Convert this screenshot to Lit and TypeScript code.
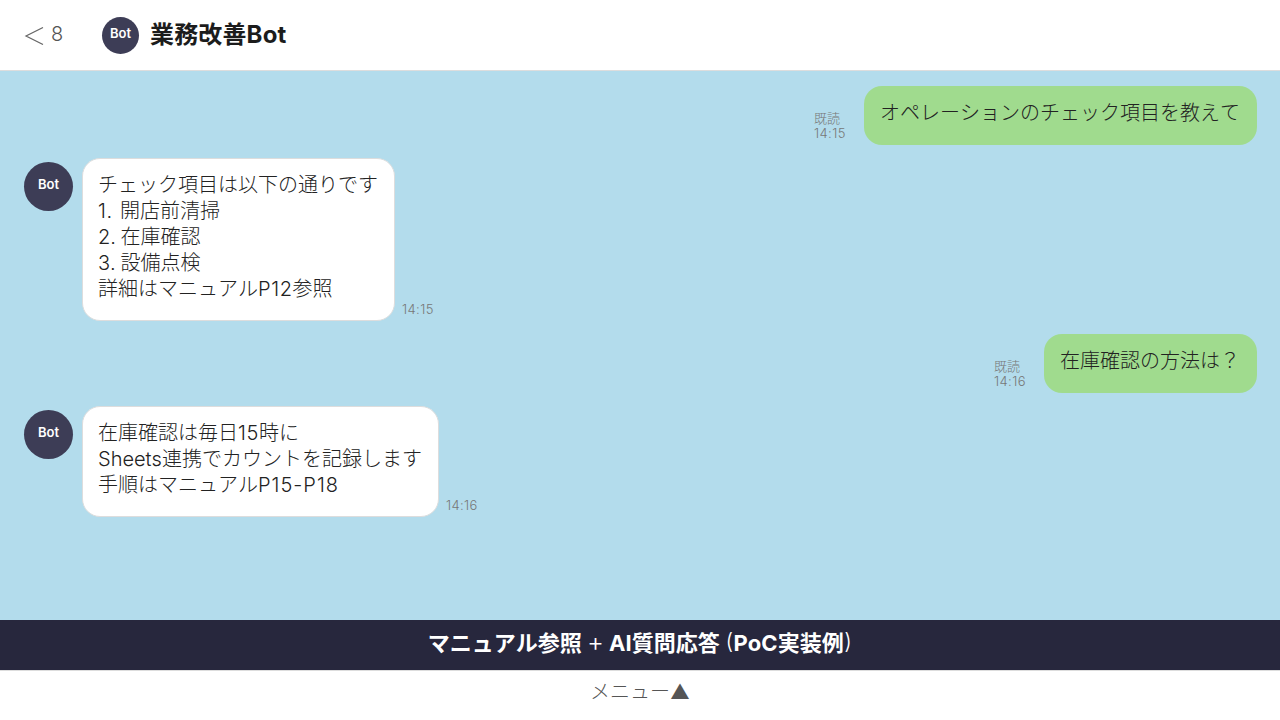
import { LitElement, html, css } from "lit";
import { customElement } from "lit/decorators.js";

const msgs = [
  { me: true, t: "14:15", lines: ["オペレーションのチェック項目を教えて"] },
  { me: false, t: "14:15", lines: ["チェック項目は以下の通りです", "1. 開店前清掃", "2. 在庫確認", "3. 設備点検", "詳細はマニュアルP12参照"] },
  { me: true, t: "14:16", lines: ["在庫確認の方法は？"] },
  { me: false, t: "14:16", lines: ["在庫確認は毎日15時に", "Sheets連携でカウントを記録します", "手順はマニュアルP15-P18"] },
];

const latClass = (p: string) => {
  if (p === "1. ") return "lat idx-one";
  if (/^\d\. $/.test(p)) return "lat idx";
  if (p.includes("-")) return "lat range";
  return /\d/.test(p) ? "lat num" : "lat";
};

const mixed = (s: string) =>
  s.split(/([A-Za-z0-9.:\- ]+)/).map((p, i) =>
    i % 2 ? html`<span class=${latClass(p)}>${p}</span>` : p
  );

@customElement("app-root")
export class AppRoot extends LitElement {
  static styles = css`
    :host {
      display: flex;
      flex-direction: column;
      width: 1280px;
      height: 720px;
      overflow: hidden;
      font-family: Inter, "Noto Sans CJK JP", sans-serif;
      font-weight: 300;
      font-kerning: none;
      background: #b3dcec;
    }
    .lat { font-weight: 350; }
    .num { letter-spacing: 0.6px; }
    .range { letter-spacing: 1px; }
    .idx-one { letter-spacing: 0.6px; word-spacing: 1px; }
    .idx { word-spacing: -1px; }
    .time { font-weight: 350; letter-spacing: 0.4px; }
    .head {
      height: 70px;
      flex: none;
      background: #fff;
      border-bottom: 1px solid #ddd;
      display: flex;
      align-items: center;
      padding: 0 24px;
    }
    .back {
      width: 78px;
      font-size: 20px;
      color: #555;
      display: flex;
      align-items: center;
      gap: 7px;
      margin-top: -2px;
    }
    .back svg { display: block; margin-top: 4px; }
    .avatar {
      border-radius: 50%;
      background: #3d3d56;
      color: #fff;
      display: flex;
      align-items: center;
      justify-content: center;
      font-weight: 600;
      flex: none;
    }
    .head .avatar { width: 37px; height: 37px; font-size: 13px; margin-right: 11px; }
    .head .avatar span { margin-top: -4px; }
    .title { font-size: 24px; font-weight: 700; color: #1c1c1c; margin-top: -6px; letter-spacing: 0.15px; }
    .chat {
      flex: 1;
      display: flex;
      flex-direction: column;
      gap: 13px;
      padding: 15px 23px 0 24px;
    }
    .row { display: flex; align-items: flex-end; }
    .row.me { justify-content: flex-end; }
    .row .avatar { width: 49px; height: 49px; font-size: 13px; margin-right: 9px; align-self: flex-start; margin-top: 4px; }
    .row .avatar span { margin-top: -6px; }
    .bubble {
      font-size: 20px;
      line-height: 26px;
      color: #222;
      padding: 13px 16px 18px 15px;
      border-radius: 18px;
      background: #fff;
      border: 1px solid #ddd;
      white-space: nowrap;
    }
    .me .bubble { background: #a0db8e; border: none; padding: 14px 17px 19px 16px; }
    .meta { font-size: 13px; line-height: 15px; color: #777; }
    .row:not(.me) .meta { margin-left: 7px; margin-bottom: 4px; }
    .me .meta { width: 50px; margin-bottom: 4px; }
    .caption {
      flex: none;
      height: 50px;
      background: #27273d;
      color: #fff;
      font-size: 22px;
      font-weight: 700;
      display: flex;
      align-items: center;
      justify-content: center;
      white-space: pre;
      padding-bottom: 8px;
      box-sizing: border-box;
    }
    .plus { font-weight: 300; font-size: 26px; }
    .paren { font-weight: 300; margin: 0 0.5px; }
    .menu {
      flex: none;
      height: 50px;
      background: #fff;
      border-top: 1px solid #ddd;
      font-size: 20px;
      color: #555;
      display: flex;
      align-items: center;
      justify-content: center;
      padding-bottom: 10px;
      box-sizing: border-box;
    }
  `;

  render() {
    return html`
      <div class="head">
        <div class="back">
          <svg width="20" height="18" viewBox="0 0 20 18"><path d="M19 .5 L2 9 L19 17.5" fill="none" stroke="#666" stroke-width="1.2"/></svg>
          <span>8</span>
        </div>
        <div class="avatar"><span>Bot</span></div>
        <div class="title">業務改善Bot</div>
      </div>
      <div class="chat">
        ${msgs.map((m) =>
          m.me
            ? html`<div class="row me">
                <div class="meta">既読<br /><span class="time">${m.t}</span></div>
                <div class="bubble">${m.lines[0]}</div>
              </div>`
            : html`<div class="row">
                <div class="avatar"><span>Bot</span></div>
                <div class="bubble">${m.lines.map((l, i) => html`${i ? html`<br />` : ""}${mixed(l)}`)}</div>
                <div class="meta"><span class="time">${m.t}</span></div>
              </div>`
        )}
      </div>
      <div class="caption">マニュアル参照 <span class="plus">+</span> AI質問応答 <span class="paren">(</span>PoC実装例<span class="paren">)</span></div>
      <div class="menu">メニュー▲</div>
    `;
  }
}
